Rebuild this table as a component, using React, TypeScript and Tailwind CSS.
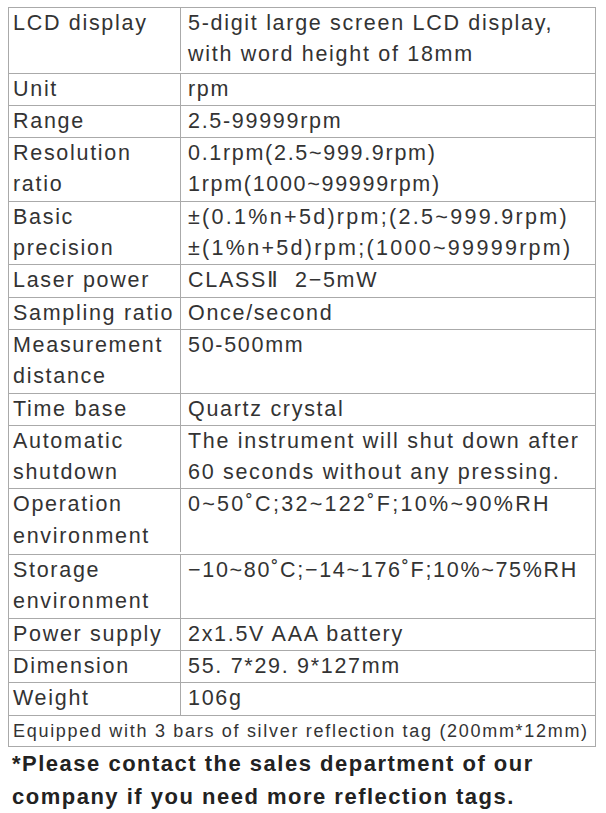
export default function App() {
  const rows: { label: string[]; value: string[]; wide?: boolean; extra?: boolean }[] = [
    {
      label: ["LCD display"],
      value: ["5-digit large screen LCD display,", "with word height of 18mm"],
      extra: true,
    },
    { label: ["Unit"], value: ["rpm"] },
    { label: ["Range"], value: ["2.5-99999rpm"] },
    {
      label: ["Resolution", "ratio"],
      value: ["0.1rpm(2.5~999.9rpm)", "1rpm(1000~99999rpm)"],
    },
    {
      label: ["Basic", "precision"],
      value: [
        "±(0.1%n+5d)rpm;(2.5~999.9rpm)",
        "±(1%n+5d)rpm;(1000~99999rpm)",
      ],
      wide: true,
    },
    { label: ["Laser power"], value: ["CLASSⅡ  2−5mW"] },
    { label: ["Sampling ratio"], value: ["Once/second"] },
    { label: ["Measurement", "distance"], value: ["50-500mm"] },
    { label: ["Time base"], value: ["Quartz crystal"] },
    {
      label: ["Automatic", "shutdown"],
      value: [
        "The instrument will shut down after",
        "60 seconds without any pressing.",
      ],
    },
    {
      label: ["Operation", "environment"],
      value: ["0~50˚C;32~122˚F;10%~90%RH"],
      wide: true,
      extra: true,
    },
    {
      label: ["Storage", "environment"],
      value: ["−10~80˚C;−14~176˚F;10%~75%RH"],
    },
    { label: ["Power supply"], value: ["2x1.5V AAA battery"] },
    { label: ["Dimension"], value: ["55. 7*29. 9*127mm"] },
    { label: ["Weight"], value: ["106g"] },
  ];

  return (
    <div className="w-[606px] h-[813px] bg-white pl-[8px] pt-[7px] font-['Liberation_Sans',Arial,sans-serif] text-[#333]">
      <div className="w-[588px] border border-[#aaa]">
        {rows.map((r) => (
          <div
            key={r.label.join(" ")}
            className={`flex border-b border-[#aaa] ${r.extra ? "pb-[2px]" : ""}`}
          >
            <div className="w-[172px] shrink-0 border-r border-[#aaa] pl-[4px] text-[21.5px] leading-[31.3px] tracking-[1.7px]">
              {r.label.map((l) => (
                <div key={l} className="whitespace-nowrap">
                  {l}
                </div>
              ))}
            </div>
            <div
              className={`flex-1 pl-[7px] text-[21.5px] leading-[31.3px] ${
                r.wide ? "tracking-[2.3px]" : "tracking-[1.7px]"
              }`}
            >
              {r.value.map((v) => (
                <div key={v} className="whitespace-pre">
                  {v}
                </div>
              ))}
            </div>
          </div>
        ))}
        <div className="pl-[4px] text-[18px] leading-[30px] tracking-[1.7px] whitespace-nowrap">
          Equipped with 3 bars of silver reflection tag (200mm*12mm)
        </div>
      </div>
      <div className="pl-[4px] text-[22px] font-bold leading-[33px] tracking-[1.5px] text-[#222]">
        <div>*Please contact the sales department of our</div>
        <div>company if you need more reflection tags.</div>
      </div>
    </div>
  );
}
